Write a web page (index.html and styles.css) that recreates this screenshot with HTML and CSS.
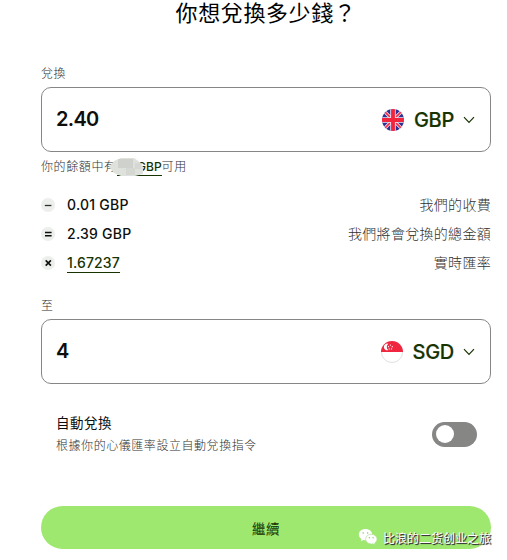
FILE: index.html
```
<!DOCTYPE html>
<html lang="zh-Hant">
<head>
  <meta charset="UTF-8" />
  <meta name="viewport" content="width=device-width, initial-scale=1.0" />
  <title>你想兌換多少錢？</title>
  <link rel="stylesheet" href="styles.css">
</head>
<body>
  <main class="convert">
    <h1>你想兌換多少錢？</h1>

    <div class="label">兌換</div>
    <div class="amount-box">
      <span class="amount">2.40</span>
      <div class="currency">
        <svg class="flag" viewBox="0 0 24 24">
          <clipPath id="round"><circle cx="12" cy="12" r="12"/></clipPath>
          <g clip-path="url(#round)">
            <rect width="24" height="24" fill="#2e3192"/>
            <path d="M2 2L22 22M22 2L2 22" stroke="#f3e6f0" stroke-width="3.6"/>
            <path d="M2 2L22 22M22 2L2 22" stroke="#ee2e4a" stroke-width="1.7"/>
            <path d="M12 0V24M0 12H24" stroke="#f3e6f0" stroke-width="6"/>
            <path d="M12 0V24M0 12H24" stroke="#f0263f" stroke-width="4.2"/>
          </g>
        </svg>
        <span>GBP</span>
        <svg class="chevron" viewBox="0 0 12 8"><path d="M1 1.2L6 6.4L11 1.2"/></svg>
      </div>
    </div>
    <div class="helper">
      <span>你的餘額中有</span><a class="balance">GBP</a><span>可用</span>
      <svg class="smudge" viewBox="0 0 38 18">
        <path d="M0 9L5 3L12 0H25L32 5L34 9V16L26 18H12L5 15Z" fill="#dfe1dd"/>
        <path d="M9 1H24V10H9Z" fill="#cfd2cc"/>
        <path d="M17 10H26V17H17ZM26 5H32V11H26Z" fill="#d5d8d2"/>
      </svg>
    </div>

    <div class="rows">
      <div class="row">
        <svg class="sign" viewBox="0 0 14 14"><circle cx="7" cy="7" r="7"/><path d="M3.8 7.5H10.4"/></svg>
        <span class="value">0.01 GBP</span>
        <span class="note">我們的收費</span>
      </div>
      <div class="row">
        <svg class="sign strong" viewBox="0 0 14 14"><circle cx="7" cy="7" r="7"/><path d="M4 5.5H10.6M4 8.7H10.6"/></svg>
        <span class="value">2.39 GBP</span>
        <span class="note">我們將會兌換的總金額</span>
      </div>
      <div class="row">
        <svg class="sign strong" viewBox="0 0 14 14"><circle cx="7" cy="7" r="7"/><path d="M4.7 4.4L9.9 9.6M9.9 4.4L4.7 9.6"/></svg>
        <span class="value"><a class="rate">1.67237</a></span>
        <span class="note">實時匯率</span>
      </div>
    </div>

    <div class="label">至</div>
    <div class="amount-box">
      <span class="amount">4</span>
      <div class="currency">
        <svg class="flag" viewBox="0 0 24 24">
          <circle cx="12" cy="12" r="11.5" fill="#fff" stroke="#dcdcdc"/>
          <path d="M0 12A12 12 0 0 1 24 12Z" fill="#f0263f"/>
          <path d="M8 3A3.7 3.7 0 1 0 8 10A4.4 4.4 0 0 1 8 3Z" fill="#fff"/>
          <g fill="#fff">
            <circle cx="10.2" cy="4.4" r=".7"/>
            <circle cx="8.2" cy="6.2" r=".7"/>
            <circle cx="12.3" cy="6.2" r=".7"/>
            <circle cx="9" cy="8.6" r=".7"/>
            <circle cx="11.5" cy="8.6" r=".7"/>
          </g>
        </svg>
        <span>SGD</span>
        <svg class="chevron" viewBox="0 0 12 8"><path d="M1 1.2L6 6.4L11 1.2"/></svg>
      </div>
    </div>

    <div class="auto">
      <div>
        <div class="auto-title">自動兌換</div>
        <div class="auto-text">根據你的心儀匯率設立自動兌換指令</div>
      </div>
      <div class="switch"><div class="knob"></div></div>
    </div>

    <button class="continue">繼續</button>
  </main>

  <div class="watermark">
    <svg class="wechat" viewBox="0 0 20 18">
      <path d="M7.5 1C3.6 1 .8 3.4 .8 6.6C.8 8.5 1.8 10 3.4 11L2.8 13.2L5.3 11.9C6 12.1 6.8 12.2 7.5 12.2C11.3 12.2 14.2 9.7 14.2 6.6C14.2 3.4 11.3 1 7.5 1Z"/>
      <path d="M13.2 6.3C10 6.3 7.6 8.4 7.6 11.1C7.6 13.8 10 15.9 13.2 15.9C13.8 15.9 14.4 15.8 15 15.7L17.2 16.8L16.7 14.9C18.2 14 19 12.7 19 11.1C19 8.4 16.4 6.3 13.2 6.3Z" stroke="#a9dc8c" stroke-width=".6"/>
      <g class="eyes">
        <circle cx="5.2" cy="5" r=".8"/>
        <circle cx="9.6" cy="5" r=".8"/>
        <circle cx="11.4" cy="9.7" r=".7"/>
        <circle cx="15.1" cy="9.7" r=".7"/>
      </g>
    </svg>
    <span lang="zh-Hans">比浪的二货创业之旅</span>
  </div>
</body>
</html>
```
FILE: styles.css
```
:root {
  --green: #9fe870;
  --dark-green: #163300;
  --ink: #0e0f0c;
  --grey: #2f312f;
}

* {
  margin: 0;
  padding: 0;
  box-sizing: border-box;
}

body {
  height: 560px;
  overflow: hidden;
  position: relative;
  background-color: #fff;
  color: var(--ink);
  font-family: Inter, "Noto Sans CJK TC", sans-serif;
}

.convert {
  width: 450px;
  margin-left: 41px;
}

h1 {
  height: 26px;
  line-height: 26px;
  font-size: 22px;
  font-weight: 400;
  letter-spacing: 0.6px;
  text-align: center;
  white-space: nowrap;
  color: #000;
}

.label {
  height: 20px;
  margin: 38px 0 3px;
  line-height: 20px;
  font-size: 12px;
  font-weight: 300;
  letter-spacing: 0.6px;
  color: var(--grey);
}

.amount-box {
  display: flex;
  align-items: center;
  justify-content: space-between;
  height: 65px;
  padding: 0 15px 0 14px;
  border: 1px solid #868685;
  border-radius: 10px;
}

.amount {
  font-size: 20px;
  font-weight: 600;
  letter-spacing: -0.7px;
  position: relative;
  top: -1px;
}

.currency {
  display: flex;
  align-items: center;
  font-size: 20px;
  font-weight: 500;
  letter-spacing: -0.3px;
  color: var(--dark-green);
}

.currency span {
  -webkit-text-stroke: 0.2px var(--dark-green);
}

.flag {
  width: 22px;
  height: 22px;
  margin-right: 10px;
}

.chevron {
  width: 12px;
  height: 8px;
  margin-left: 9px;
  fill: none;
  stroke: var(--dark-green);
  stroke-width: 1.2;
}

.helper {
  display: flex;
  align-items: center;
  position: relative;
  height: 20px;
  margin-top: 5px;
  font-size: 12px;
  font-weight: 300;
  line-height: 18px;
  letter-spacing: 0.6px;
  color: var(--grey);
}

.balance {
  width: 45px;
  height: 18px;
  border-bottom: 1px solid var(--dark-green);
  text-align: right;
  font-weight: 500;
  letter-spacing: 0;
  color: var(--dark-green);
}

.smudge {
  position: absolute;
  left: 68px;
  top: 1px;
  width: 38px;
  height: 18px;
}

.rows {
  margin-top: 13px;
}

.row {
  display: flex;
  align-items: center;
  height: 29px;
  line-height: 20px;
}

.sign {
  width: 14px;
  height: 14px;
  margin-right: 12px;
}

.sign circle {
  fill: #ecefeb;
}

.sign path {
  stroke: var(--grey);
  stroke-width: 1.3;
}

.sign.strong path {
  stroke: var(--ink);
  stroke-width: 1.6;
}

.value {
  font-size: 14px;
  font-weight: 500;
  letter-spacing: 0.25px;
}

.rate {
  display: block;
  height: 20px;
  line-height: 20px;
  border-bottom: 1px solid var(--dark-green);
  letter-spacing: 0.15px;
  color: var(--dark-green);
}

.note {
  margin-left: auto;
  font-size: 14px;
  font-weight: 300;
  letter-spacing: 0.3px;
  color: var(--grey);
}

.rows + .label {
  margin-top: 19px;
}

.auto {
  display: flex;
  align-items: center;
  justify-content: space-between;
  height: 44px;
  margin-top: 28px;
  padding: 0 14px 0 15px;
}

.auto-title {
  line-height: 22px;
  font-size: 13.5px;
  letter-spacing: 0.5px;
}

.auto-text {
  padding-top: 1px;
  line-height: 22px;
  font-size: 12px;
  font-weight: 300;
  letter-spacing: 0.55px;
  color: var(--grey);
}

.switch {
  width: 45px;
  height: 25px;
  padding: 3px 4px;
  border-radius: 13px;
  background-color: #868685;
}

.knob {
  width: 18px;
  height: 18px;
  border-radius: 50%;
  background-color: white;
}

.continue {
  display: block;
  width: 450px;
  height: 43px;
  margin-top: 50px;
  border: none;
  border-radius: 22px;
  background-color: var(--green);
  color: var(--dark-green);
  font-family: inherit;
  font-size: 13.5px;
  letter-spacing: 0.5px;
}

.watermark {
  display: flex;
  align-items: center;
  position: absolute;
  left: 358px;
  top: 527px;
  height: 20px;
  font-family: "Noto Sans CJK SC", sans-serif;
  font-size: 12px;
  white-space: nowrap;
  color: white;
  text-shadow: 1px 1px 1px #333, 1px 1px 0 #555;
}

.wechat {
  width: 20px;
  height: 18px;
  margin-right: 5px;
  fill: white;
}

.wechat .eyes {
  fill: #8fc76c;
}
```
